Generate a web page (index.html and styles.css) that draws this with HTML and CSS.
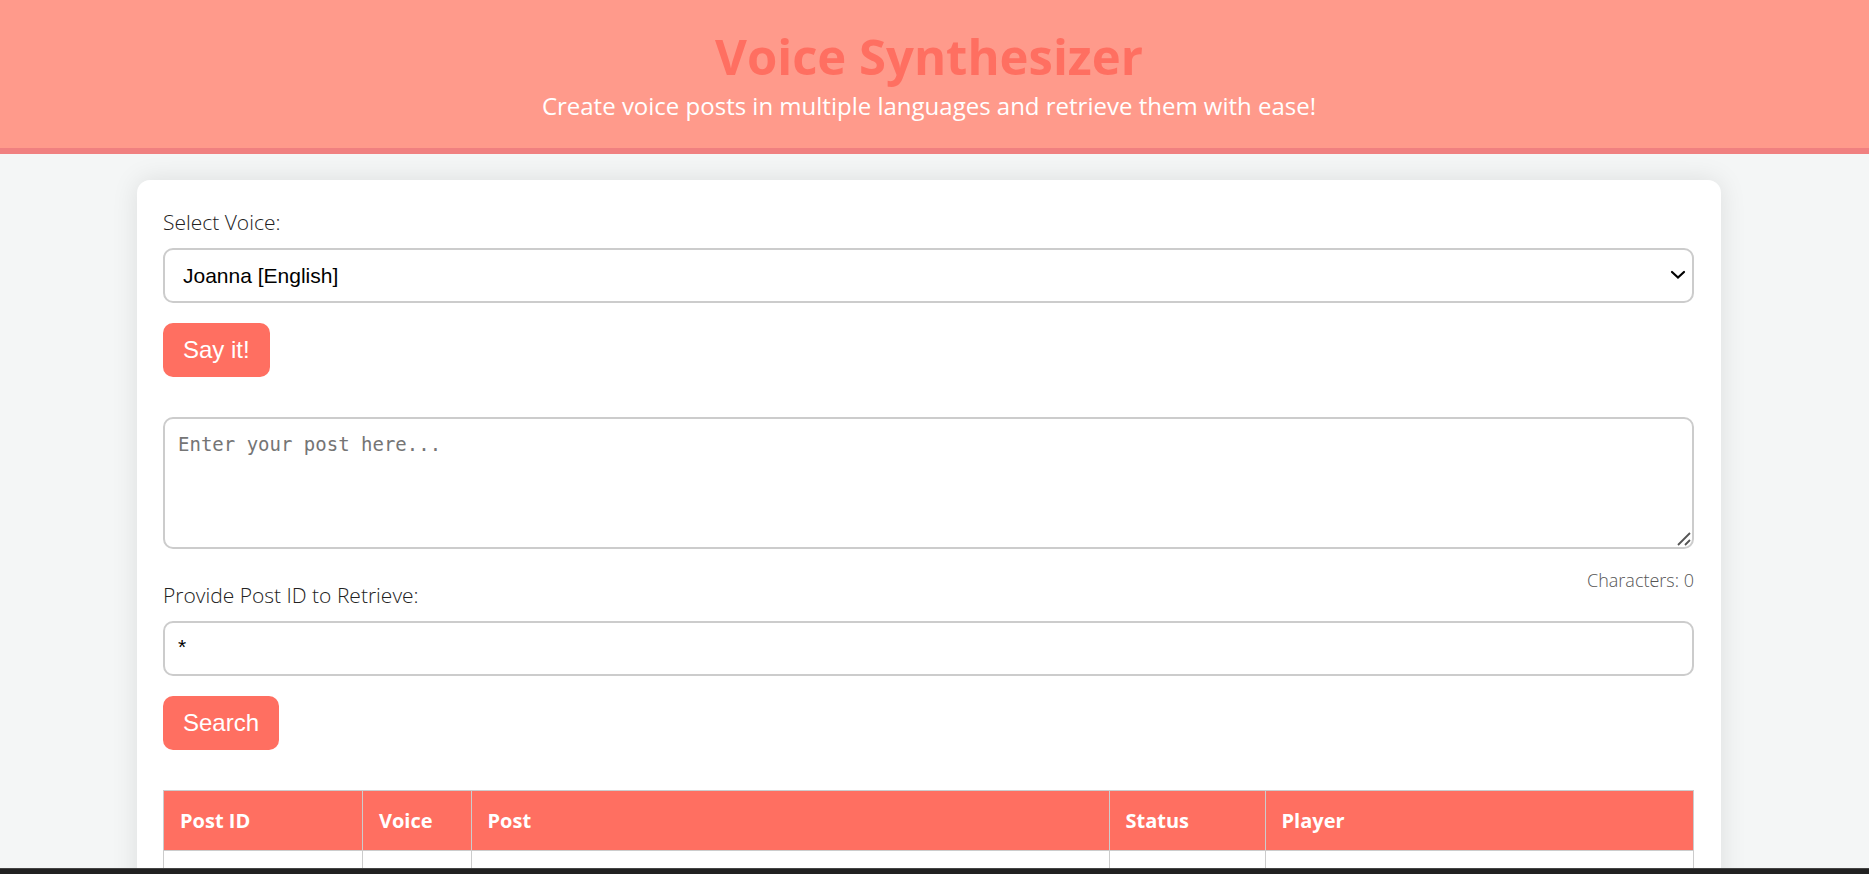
FILE: index.html
```html
<!DOCTYPE html>
<html lang="en">
<head>
<meta charset="utf-8">
<meta name="viewport" content="width=device-width, initial-scale=1">
<title>Voice Synthesizer</title>
<link rel="stylesheet" href="styles.css">
</head>
<body>
<header class="header">
  <h1 class="title">Voice Synthesizer</h1>
  <p class="tagline">Create voice posts in multiple languages and retrieve them with ease!</p>
</header>
<main class="page">
  <div class="card">
    <label class="label" for="voice">Select Voice:</label>
    <div class="control">
      <select class="field select" id="voice">
        <option>Joanna [English]</option>
      </select>
      <svg class="chevron" width="16" height="10" viewBox="0 0 16 10" aria-hidden="true"><path d="M2 2l6 5.500 6-5.500" fill="none" stroke="#000" stroke-width="2.200" stroke-linecap="round"/></svg>
    </div>
    <button class="button" type="button">Say it!</button>
    <div class="control">
      <textarea class="field post" id="post" aria-label="Post text" placeholder="Enter your post here..."></textarea>
      <svg class="grip" width="14" height="14" viewBox="0 0 14 14" aria-hidden="true"><path d="M1 13L13 1M8 13l5-5" fill="none" stroke="#555" stroke-width="1.800"/></svg>
    </div>
    <div class="row">
      <label class="label" for="post-id">Provide Post ID to Retrieve:</label>
      <span class="counter">Characters: 0</span>
    </div>
    <input class="field input" id="post-id" type="text" value="*">
    <button class="button" type="button">Search</button>
    <table class="posts">
      <colgroup><col class="col-id"><col class="col-voice"><col class="col-post"><col class="col-status"><col></colgroup>
      <thead><tr><th>Post ID</th><th>Voice</th><th>Post</th><th>Status</th><th>Player</th></tr></thead>
      <tbody><tr><td></td><td></td><td></td><td></td><td></td></tr></tbody>
    </table>
  </div>
</main>
<div class="taskbar"></div>
</body>
</html>
```
FILE: styles.css
```css
* {
  box-sizing: border-box;
}

body {
  margin: 0;
  height: 100vh;
  overflow: hidden;
  background: #f4f6f6;
  color: #222;
  font-family: "Segoe UI", "Open Sans", sans-serif;
}

.header {
  padding: 26px 11px 22px 0;
  border-bottom: 6px solid #f08080;
  background: #ff9a8b;
  text-align: center;
}

.title {
  margin: 0;
  color: #ff6f61;
  font-size: 49px;
  line-height: 60px;
  font-weight: 700;
}

.tagline {
  margin: 0;
  color: #fff;
  font-size: 24px;
  line-height: 40px;
}

.page {
  padding: 26px 148px 40px 137px;
}

.card {
  padding: 26px 27px 26px 26px;
  border-radius: 13px;
  background: #fff;
  box-shadow: 0 0 27px rgba(0, 0, 0, 0.1);
}

.label {
  display: block;
  padding: 1px 0 11px;
  font-size: 21px;
  line-height: 30px;
  font-weight: 300;
}

.control {
  display: flex;
  position: relative;
}

.field {
  display: block;
  width: 100%;
  border: 2px solid #ccc;
  border-radius: 10px;
  background: #fff;
  color: #000;
  font-size: 21px;
}

.select {
  height: 55px;
  padding: 0 18px;
  appearance: none;
  font-family: "Liberation Sans", Arial, sans-serif;
}

.chevron {
  position: absolute;
  top: 22px;
  right: 8px;
  pointer-events: none;
}

.button {
  display: block;
  height: 54px;
  margin: 20px 0 40px;
  padding: 0 20px;
  border: 0;
  border-radius: 10px;
  background: #ff6f61;
  color: #fff;
  font-family: "Liberation Sans", Arial, sans-serif;
  font-size: 24px;
}

.post {
  height: 132px;
  padding: 13px;
  resize: vertical;
  font-family: "DejaVu Sans Mono", monospace;
  font-size: 19px;
  line-height: 25px;
}

.post::placeholder {
  color: #757575;
}

.post::-webkit-resizer {
  background: transparent;
}

.grip {
  position: absolute;
  right: 3px;
  bottom: 3px;
  pointer-events: none;
}

.row {
  display: flex;
  justify-content: space-between;
  align-items: flex-start;
  padding-top: 18px;
}

.row .label {
  padding-top: 13px;
}

.counter {
  color: #555;
  font-size: 18px;
  line-height: 27px;
  font-weight: 300;
}

.input {
  height: 55px;
  padding: 0 13px 4px;
  font-family: "Liberation Sans", Arial, sans-serif;
}

.posts {
  width: 100%;
  border-collapse: collapse;
  table-layout: fixed;
}

.col-id {
  width: 13%;
}

.col-voice {
  width: 7.1%;
}

.col-post {
  width: 41.7%;
}

.col-status {
  width: 10.2%;
}

.posts th,
.posts td {
  height: 60px;
  padding: 0 16px;
  border: 1px solid #ccc;
  text-align: left;
}

.posts th {
  background: #ff6f61;
  color: #fff;
  font-size: 20px;
  font-weight: 700;
}

.taskbar {
  position: fixed;
  right: 0;
  bottom: 0;
  left: 0;
  height: 6px;
  border-top: 1px solid #444;
  background: #212121;
}
```
